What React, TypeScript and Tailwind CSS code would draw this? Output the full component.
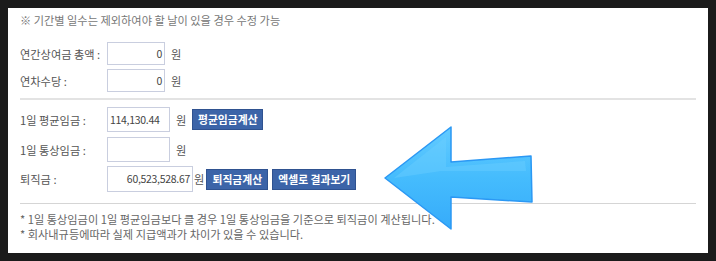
import type { ReactNode } from 'react'

const font = { fontFamily: '"Noto Sans CJK KR", "Noto Sans", sans-serif' }

type RowProps = {
  label: string
  value?: string
  inputWidth: string
  align?: 'left' | 'right'
  tight?: boolean
  children?: ReactNode
  className?: string
}

function Row({ label, value = '', inputWidth, align = 'right', tight, children, className }: RowProps) {
  return (
    <div className={`flex items-center ${className ?? ''}`}>
      <span className="w-[87px] shrink-0 text-[11.2px] leading-[16px] text-[#555]">{label}</span>
      <div
        className={`flex h-full items-center border border-[#c9cedf] bg-white px-[2px] text-[10.5px] tracking-[-0.3px] text-[#444] ${inputWidth} ${
          align === 'right' ? 'justify-end' : 'justify-start'
        }`}
      >
        {value}
      </div>
      <span className={`text-[11.2px] leading-[16px] text-[#555] ${tight ? 'ml-[1px]' : 'ml-[6px]'}`}>원</span>
      {children}
    </div>
  )
}

function Btn({ children, className }: { children: ReactNode; className?: string }) {
  return (
    <button
      className={`flex h-[21px] items-center justify-center border border-[#2f5290] bg-[#3c64a8] text-[10.8px] font-bold text-white ${className ?? ''}`}
    >
      {children}
    </button>
  )
}

function Arrow() {
  return (
    <svg className="pointer-events-none absolute left-0 top-0" width="716" height="261" viewBox="0 0 716 261">
      <defs>
        <linearGradient id="ag" x1="0" y1="0" x2="0" y2="1">
          <stop offset="0" stopColor="#63cbff" />
          <stop offset="0.5" stopColor="#45bcfd" />
          <stop offset="1" stopColor="#36abfa" />
        </linearGradient>
      </defs>
      <polygon
        points="385,178 451,127 451,162 531,156 532,202 451,197 451,229"
        fill="url(#ag)"
        stroke="#2b98f4"
        strokeWidth="1.5"
        strokeLinejoin="round"
      />
      <polygon points="394,178 446,137 446,167 525,161 526,171 441,171" fill="#6dd0ff" opacity="0.4" />
    </svg>
  )
}

export default function App() {
  return (
    <div className="relative h-[261px] w-[716px] bg-[#1b1b1b] pl-[8px] pt-[8px]" style={font}>
      <div className="h-[245px] w-[700px] bg-white px-[12px]">
        <p className="pt-[4px] text-[11.2px] leading-[16px] text-[#777]">
          ※ 기간별 일수는 제외하여야 할 날이 있을 경우 수정 가능
        </p>

        <Row label="연간상여금 총액 :" value="0" inputWidth="w-[58px]" className="mt-[14px] h-[23px]" />
        <Row label="연차수당 :" value="0" inputWidth="w-[58px]" className="mt-[4px] h-[23px]" />

        <div className="mt-[6px] h-[2px] bg-[#e3e3e3]" />

        <Row
          label="1일 평균임금 :"
          value="114,130.44"
          align="left"
          inputWidth="w-[63px]"
          className="mt-[7px] h-[25px]"
        >
          <Btn className="ml-[6px] w-[71px]">평균임금계산</Btn>
        </Row>
        <Row label="1일 통상임금 :" inputWidth="w-[63px]" className="mt-[5px] h-[25px]" />
        <Row
          label="퇴직금 :"
          value="60,523,528.67"
          inputWidth="w-[86px]"
          tight
          className="mt-[4px] h-[26px]"
        >
          <Btn className="ml-[2px] w-[62px]">퇴직금계산</Btn>
          <Btn className="ml-[4px] w-[84px]">엑셀로 결과보기</Btn>
        </Row>

        <div className="mt-[11px] h-px bg-[#d5d5d5]" />

        <div className="mt-[8px] text-[11.2px] leading-[15px] text-[#666]">
          <p>* 1일 통상임금이 1일 평균임금보다 클 경우 1일 통상임금을 기준으로 퇴직금이 계산됩니다.</p>
          <p>* 회사내규등에따라 실제 지급액과가 차이가 있을 수 있습니다.</p>
        </div>
      </div>
      <Arrow />
    </div>
  )
}
